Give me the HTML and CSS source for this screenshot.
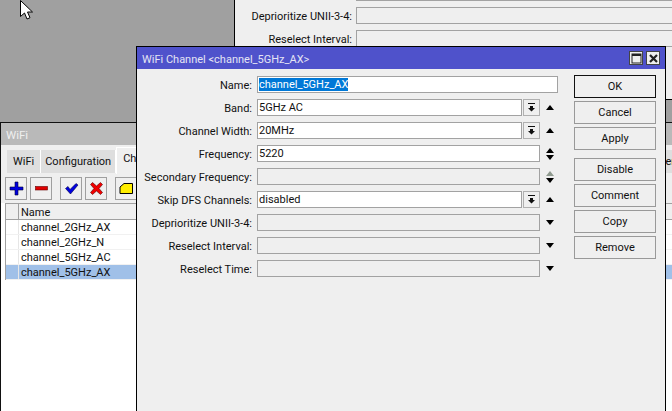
FILE: index.html
```html
<!DOCTYPE html>
<html lang="en">
<head>
<meta charset="utf-8">
<title>WiFi Channel</title>
<link rel="stylesheet" href="styles.css">
</head>
<body>
<div class="desktop">
  <svg class="cursor" width="13" height="20" viewBox="0 0 13 20"><path d="M.5.5V16.500L4.500 13 7 19l3-1.300L7.500 12H12.500Z" fill="#fff" stroke="#000"/></svg>

  <section class="win back">
    <div class="back-row"><span class="back-label"></span><span class="field off"></span></div>
    <div class="back-row"><span class="back-label">Deprioritize UNII-3-4:</span><span class="field off"></span></div>
    <div class="back-row"><span class="back-label">Reselect Interval:</span><span class="field off"></span></div>
  </section>

  <section class="win wifi">
    <header class="wifi-title">WiFi</header>
    <nav class="tabs">
      <span class="tab">WiFi</span>
      <span class="tab tight">Configuration</span>
      <span class="tab active">Channels</span>
      <span class="tab far">Interfaces</span>
    </nav>
    <div class="toolbar">
      <span class="tool"><svg width="15" height="15" viewBox="0 0 15 15"><path d="M6 1h3v5h5v3H9v5H6V9H1V6h5z" fill="#0000e0" stroke="#000033" stroke-width=".6"/></svg></span>
      <span class="tool"><svg width="15" height="15" viewBox="0 0 15 15"><rect x="1.500" y="5.500" width="12" height="3.500" fill="#e00000" stroke="#660000" stroke-width=".6"/></svg></span>
      <span class="tool gap"><svg width="15" height="15" viewBox="0 0 15 15"><path d="M1.500 7.500 4 5.500l2 3L12 2.500l2 1.500L6.500 13Z" fill="#0000e0" stroke="#000044" stroke-width=".6"/></svg></span>
      <span class="tool"><svg width="15" height="15" viewBox="0 0 15 15"><path d="M1.500 3.500 3.500 1.500l4 3.500 4-3.500 2 2-3.500 4 3.500 4-2 2-4-3.500-4 3.500-2-2L5 7.500Z" fill="#f00000" stroke="#550000" stroke-width=".6"/></svg></span>
      <span class="tool gap"><svg width="15" height="15" viewBox="0 0 15 15"><path d="M1 6 5 2.500h8.500V12.500H1Z" fill="#ffee00" stroke="#000"/></svg></span>
    </div>
    <div class="list">
      <div class="list-row head"><span class="cell-mark"></span><span class="cell-name">Name</span></div>
      <div class="list-row"><span class="cell-mark"></span><span class="cell-name">channel_2GHz_AX</span></div>
      <div class="list-row"><span class="cell-mark"></span><span class="cell-name">channel_2GHz_N</span></div>
      <div class="list-row"><span class="cell-mark"></span><span class="cell-name">channel_5GHz_AC</span></div>
      <div class="list-row selected"><span class="cell-mark"></span><span class="cell-name">channel_5GHz_AX</span></div>
    </div>
  </section>

  <section class="win dialog">
    <header class="dialog-title">
      <span class="dialog-name">WiFi Channel &lt;channel_5GHz_AX&gt;</span>
      <span class="title-btn"><svg width="11" height="11" viewBox="0 0 11 11"><rect x="1" y="1" width="9" height="9" fill="none" stroke="#222" stroke-width="1"/><rect x="1" y="1" width="9" height="2" fill="#222"/></svg></span>
      <span class="title-btn"><svg width="11" height="11" viewBox="0 0 11 11"><path d="M2 2l7 7M9 2l-7 7" stroke="#222" stroke-width="2.200" fill="none"/></svg></span>
    </header>
    <div class="dialog-body">
      <form class="form">
        <div class="row"><label class="label">Name:</label><span class="field wide on"><span class="selection">channel_5GHz_AX</span></span></div>
        <div class="row"><label class="label">Band:</label><span class="field on">5GHz AC</span><span class="drop"><svg width="9" height="9" viewBox="0 0 9 9"><path d="M1 0h7v1H1zM3 3h3v2h2L4.500 8.500 1 5h2z" fill="#111"/></svg></span><span class="arrows"><i class="up"></i></span></div>
        <div class="row"><label class="label">Channel Width:</label><span class="field on">20MHz</span><span class="drop"><svg width="9" height="9" viewBox="0 0 9 9"><path d="M1 0h7v1H1zM3 3h3v2h2L4.500 8.500 1 5h2z" fill="#111"/></svg></span><span class="arrows"><i class="up"></i></span></div>
        <div class="row"><label class="label">Frequency:</label><span class="field full on">5220</span><span class="arrows"><i class="up"></i><i class="down"></i></span></div>
        <div class="row"><label class="label">Secondary Frequency:</label><span class="field full off"></span><span class="arrows"><i class="up dim"></i><i class="down"></i></span></div>
        <div class="row"><label class="label">Skip DFS Channels:</label><span class="field on">disabled</span><span class="drop"><svg width="9" height="9" viewBox="0 0 9 9"><path d="M1 0h7v1H1zM3 3h3v2h2L4.500 8.500 1 5h2z" fill="#111"/></svg></span><span class="arrows"><i class="up"></i></span></div>
        <div class="row"><label class="label">Deprioritize UNII-3-4:</label><span class="field full off"></span><span class="arrows"><i class="down"></i></span></div>
        <div class="row"><label class="label">Reselect Interval:</label><span class="field full off"></span><span class="arrows"><i class="down"></i></span></div>
        <div class="row"><label class="label">Reselect Time:</label><span class="field full off"></span><span class="arrows"><i class="down"></i></span></div>
      </form>
      <div class="actions">
        <span class="btn default">OK</span>
        <span class="btn">Cancel</span>
        <span class="btn">Apply</span>
        <span class="btn sep">Disable</span>
        <span class="btn">Comment</span>
        <span class="btn">Copy</span>
        <span class="btn">Remove</span>
      </div>
    </div>
  </section>
</div>
</body>
</html>
```
FILE: styles.css
```css
* { box-sizing: border-box; }
html, body { margin: 0; height: 100%; overflow: hidden; }
body { font-family: Roboto, "Liberation Sans", Arial, sans-serif; font-size: 11px; color: #111; }

.desktop { position: relative; width: 672px; height: 411px; background: #a0a0a0; overflow: hidden; }
.cursor { position: absolute; left: 20px; top: 0; }

.win { position: absolute; background: #efefef; border: 1px solid #000; }

.back { left: 234px; top: -20px; width: 480px; height: 120px; }
.back-row { display: flex; align-items: center; height: 23px; }
.back-label { width: 118px; padding: 2px 1px 0 0; text-align: right; white-space: nowrap; flex: none; }
.back .field { width: 330px; margin-left: 3px; }

.wifi { left: 0; top: 122px; width: 700px; height: 300px; border-color: #111; background: #fff; overflow: hidden; }
.wifi-title { height: 22px; background: #b9b9b9; color: #efefef; padding: 0 5px; font-size: 11.500px; line-height: 24px; }
.tabs { display: flex; background: #efefef; height: 29px; padding: 2px 6px 0; align-items: flex-end; }
.tab { display: block; height: 23px; background: #dedede; padding: 0 6px; line-height: 23px; border-right: 1px solid #fff; margin-bottom: 1px; white-space: nowrap; }
.tab.tight { padding: 0 4px; }
.tab.active { background: #efefef; height: 27px; line-height: 22px; border: 1px solid #fff; border-bottom: 0; margin-bottom: 0; }
.tab.far { margin-left: 471px; }
.toolbar { display: flex; gap: 3px; background: #efefef; padding: 3px 4px 0; height: 29px; }
.tool { width: 22px; height: 23px; border: 1px solid #9f9f9f; background: #efefef; display: flex; align-items: center; justify-content: center; }
.tool.gap { margin-left: 5px; }

.list { margin-left: 4px; border-left: 1px solid #a0a0a0; }
.list-row { display: flex; height: 15px; line-height: 16px; border-bottom: 1px solid #f1f1f1; }
.list-row.head { height: 17px; background: #efefef; border-top: 1px solid #a0a0a0; border-bottom: 1px solid #a0a0a0; line-height: 17px; }
.cell-mark { width: 13px; flex: none; border-right: 1px solid #e6e6e6; }
.head .cell-mark { border-right-color: #a0a0a0; }
.cell-name { padding-left: 2px; white-space: nowrap; }
.list-row.selected { background: #a0c0e8; }

.dialog { left: 136px; top: 46px; width: 530px; height: 380px; }
.dialog-title { display: flex; align-items: center; gap: 3px; height: 22px; background: #4f52cb; padding-right: 5px; }
.dialog-name { flex: 1; color: #e4e4f4; padding: 2px 0 0 5px; font-size: 11px; }
.title-btn { width: 14px; height: 14px; background: #efefef; border: 1px solid #444; display: flex; align-items: center; justify-content: center; }

.dialog-body { display: flex; padding-top: 4px; }
.form { width: 437px; }
.row { display: flex; align-items: center; height: 23px; }
.label { width: 120px; padding: 2px 5px 0 0; text-align: right; white-space: nowrap; flex: none; }
.field { display: block; height: 17px; border: 1px solid #a2a2a2; padding: 0 1px; line-height: 16px; width: 265px; flex: none; white-space: nowrap; }
.field.on { background: #fff; }
.field.off { background: #efefef; }
.field.full { width: 283px; }
.field.wide { width: 301px; }
.selection { background: #0078d7; color: #fff; }
.drop { width: 17px; height: 17px; margin-left: 1px; border: 1px solid #b0b0b0; background: #efefef; display: flex; align-items: center; justify-content: center; flex: none; }
.arrows { width: 9px; margin-left: 6px; display: flex; flex-direction: column; gap: 2px; flex: none; }
.arrows i { display: block; width: 0; height: 0; border-left: 4.500px solid transparent; border-right: 4.500px solid transparent; }
.arrows .up { border-bottom: 5px solid #000; }
.arrows .up.dim { border-bottom-color: #8f9a8f; }
.arrows .down { border-top: 5px solid #000; }

.actions { display: flex; flex-direction: column; gap: 3px; padding-top: 2px; }
.btn { width: 82px; height: 23px; border: 1px solid #999; background: #efefef; text-align: center; line-height: 22px; }
.btn.default { border-color: #111; }
.btn.sep { margin-top: 5px; }
```
